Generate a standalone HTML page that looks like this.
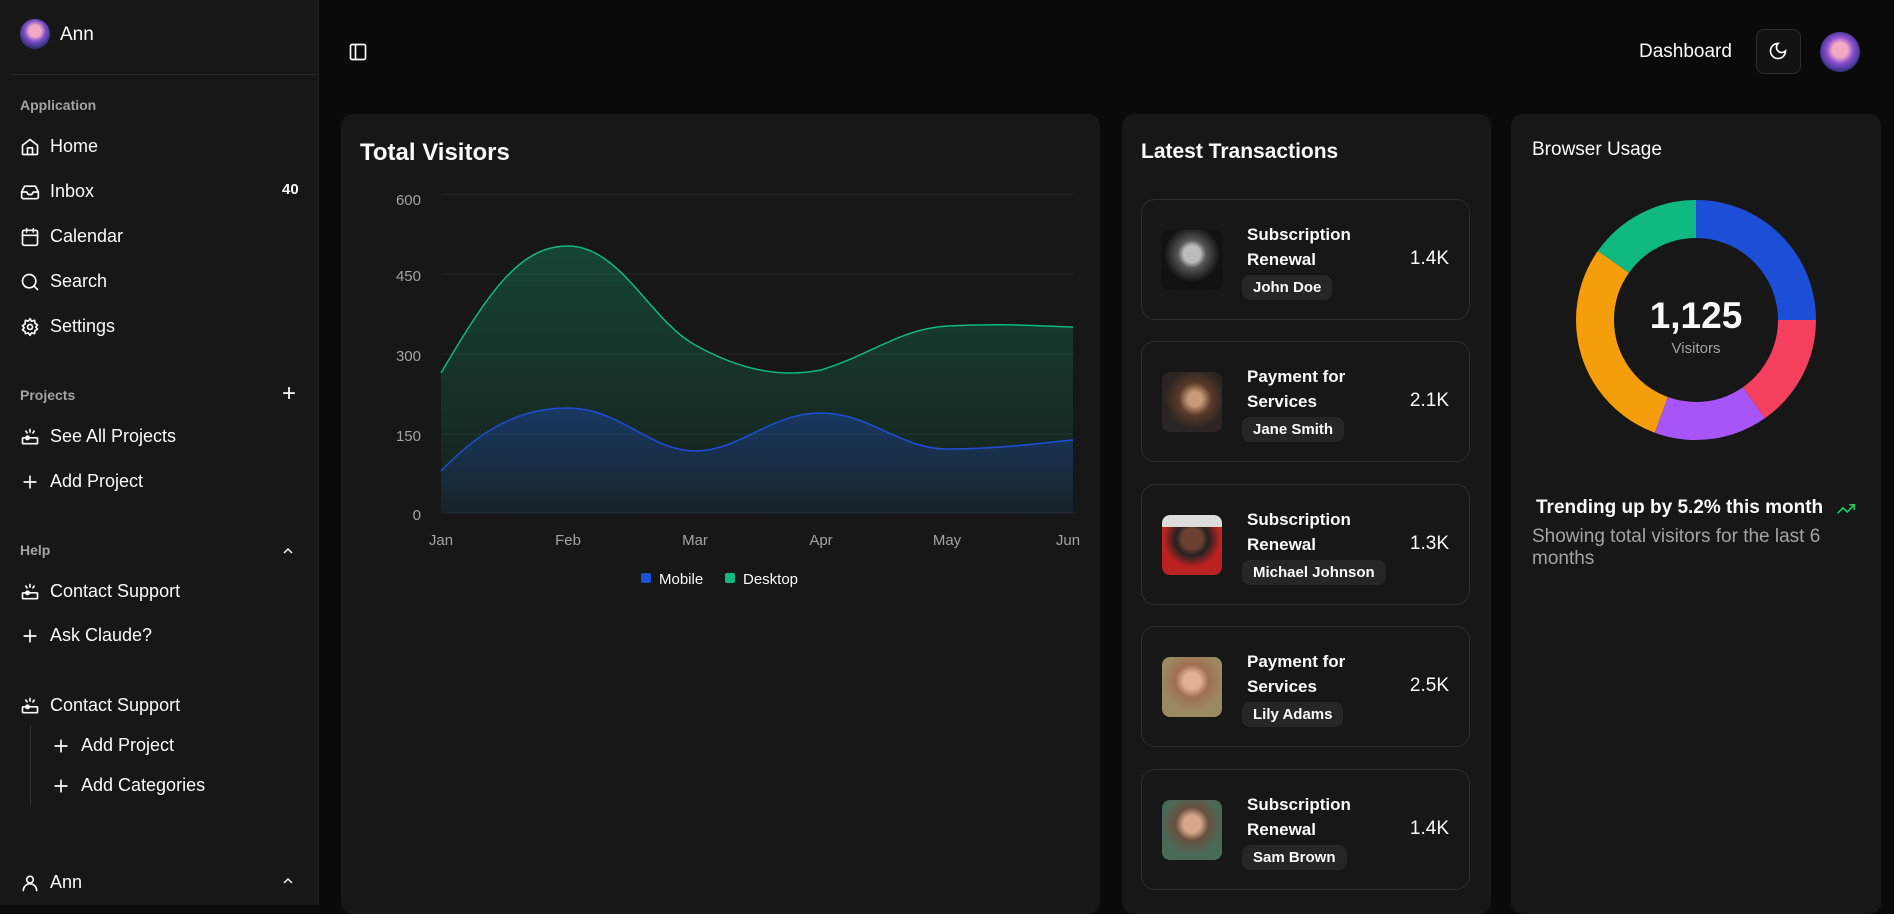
<!DOCTYPE html>
<html><head><meta charset="utf-8"><style>
*{box-sizing:border-box;margin:0;padding:0}
body{width:1894px;height:905px;overflow:hidden;background:#0a0a0a;font-family:"Liberation Sans",sans-serif;color:#fafafa;position:relative}
.sb{position:absolute;left:0;top:0;width:319px;height:905px;background:#171717;border-right:1px solid #222}
.a{position:absolute}
.it{position:absolute;left:20px;font-size:18px;display:flex;align-items:center;gap:0}
.it svg{width:20px;height:20px;margin-right:10px;stroke:#fafafa;fill:none;stroke-width:2;stroke-linecap:round;stroke-linejoin:round}
.lbl{position:absolute;left:20px;font-size:14px;font-weight:bold;color:#a3a3a3}
.card{position:absolute;background:#171717;border-radius:12px}
.tx{position:absolute;left:1141px;width:329px;height:121px;border:1px solid #2e2e2e;border-radius:14px}
.tx .av{position:absolute;left:20px;top:30px;width:60px;height:60px;border-radius:8px}
.tx .t{position:absolute;left:105px;top:22px;font-size:17px;font-weight:bold;line-height:25px;width:120px}
.tx .b{position:absolute;left:100px;top:75px;background:#262626;border-radius:8px;padding:4px 11px;font-size:15px;font-weight:bold}
.tx .v{position:absolute;right:20px;top:48px;font-size:19px}
</style></head><body>
<div class="sb">
 <div class="a" style="left:20px;top:19px;width:30px;height:30px;border-radius:50%;background:radial-gradient(circle at 50% 40%,#f3a9c4 0 25%,#7b4fc9 45%,#2b2d6e 75%)"></div>
 <div class="a" style="left:60px;top:24px;font-size:19px">Ann</div>
 <div class="a" style="left:10px;top:74px;width:309px;height:1px;background:#2a2a2a"></div>
 <div class="lbl" style="top:97px">Application</div>
 <div class="it" style="top:136px"><svg viewBox="0 0 24 24"><path d="M3 10l9-7 9 7v10a1 1 0 0 1-1 1H4a1 1 0 0 1-1-1z"/><path d="M9 21v-8h6v8"/></svg>Home</div>
 <div class="it" style="top:181px"><svg viewBox="0 0 24 24"><path d="M22 12h-6l-2 3h-4l-2-3H2"/><path d="M5.5 5h13L22 12v6a2 2 0 0 1-2 2H4a2 2 0 0 1-2-2v-6z"/></svg>Inbox</div>
 <div class="a" style="left:282px;top:181px;font-size:15px;font-weight:bold">40</div>
 <div class="it" style="top:226px"><svg viewBox="0 0 24 24"><rect x="3" y="4" width="18" height="18" rx="2"/><path d="M16 2v4M8 2v4M3 10h18"/></svg>Calendar</div>
 <div class="it" style="top:271px"><svg viewBox="0 0 24 24"><circle cx="11" cy="11" r="8"/><path d="M21 21l-4.3-4.3"/></svg>Search</div>
 <div class="it" style="top:316px"><svg viewBox="0 0 24 24"><circle cx="12" cy="12" r="3"/><path d="M12 2l2 3 3.5-1 .5 3.5 3 2-2 2.5 2 2.5-3 2-.5 3.5-3.5-1-2 3-2-3-3.5 1L6 17.5l-3-2 2-2.5-2-2.5 3-2L6.5 4 10 5z"/></svg>Settings</div>
 <div class="lbl" style="top:387px">Projects</div>
 <div class="a" style="left:282px;top:380px;font-size:24px;font-weight:300">+</div>
 <div class="it" style="top:426px"><svg viewBox="0 0 24 24"><rect x="3" y="13" width="18" height="7" rx="1"/><circle cx="9" cy="13" r="2"/><path d="M12 3v3M7 5l1.5 2M17 5l-1.5 2"/></svg>See All Projects</div>
 <div class="it" style="top:471px"><svg viewBox="0 0 24 24"><path d="M12 5v14M5 12h14"/></svg>Add Project</div>
 <div class="lbl" style="top:542px">Help</div>
 <svg class="a" style="left:280px;top:543px" width="16" height="16" viewBox="0 0 24 24" fill="none" stroke="#fafafa" stroke-width="2"><path d="M6 15l6-6 6 6"/></svg>
 <div class="it" style="top:581px"><svg viewBox="0 0 24 24"><rect x="3" y="13" width="18" height="7" rx="1"/><circle cx="9" cy="13" r="2"/><path d="M12 3v3M7 5l1.5 2M17 5l-1.5 2"/></svg>Contact Support</div>
 <div class="it" style="top:625px"><svg viewBox="0 0 24 24"><path d="M12 5v14M5 12h14"/></svg>Ask Claude?</div>
 <div class="it" style="top:695px"><svg viewBox="0 0 24 24"><rect x="3" y="13" width="18" height="7" rx="1"/><circle cx="9" cy="13" r="2"/><path d="M12 3v3M7 5l1.5 2M17 5l-1.5 2"/></svg>Contact Support</div>
 <div class="a" style="left:30px;top:725px;width:1px;height:80px;background:#333"></div>
 <div class="it" style="left:51px;top:735px"><svg viewBox="0 0 24 24"><path d="M12 5v14M5 12h14"/></svg>Add Project</div>
 <div class="it" style="left:51px;top:775px"><svg viewBox="0 0 24 24"><path d="M12 5v14M5 12h14"/></svg>Add Categories</div>
 <div class="it" style="top:872px"><svg viewBox="0 0 24 24"><circle cx="12" cy="8" r="4"/><path d="M4 21a8 8 0 0 1 16 0"/></svg>Ann</div>
 <svg class="a" style="left:280px;top:873px" width="16" height="16" viewBox="0 0 24 24" fill="none" stroke="#fafafa" stroke-width="2"><path d="M6 15l6-6 6 6"/></svg>
</div>
<svg class="a" style="left:348px;top:42px" width="20" height="20" viewBox="0 0 24 24" fill="none" stroke="#fafafa" stroke-width="2"><rect x="3" y="3" width="18" height="18" rx="2"/><path d="M9 3v18"/></svg>
<div class="a" style="left:1639px;top:41px;font-size:19px">Dashboard</div>
<div class="a" style="left:1756px;top:29px;width:45px;height:45px;border:1px solid #2e2e2e;border-radius:8px;background:#121212"></div>
<svg class="a" style="left:1768px;top:41px" width="20" height="20" viewBox="0 0 24 24" fill="none" stroke="#fafafa" stroke-width="2"><path d="M12 3a6 6 0 0 0 9 9 9 9 0 1 1-9-9z"/></svg>
<div class="a" style="left:1820px;top:32px;width:40px;height:40px;border-radius:50%;background:radial-gradient(circle at 50% 45%,#f3a9c4 0 25%,#8a4fd0 45%,#2b3080 75%)"></div>

<div class="card" style="left:341px;top:114px;width:759px;height:800px"></div>
<div class="a" style="left:360px;top:139px;font-size:24px;font-weight:bold">Total Visitors</div>
<svg class="a" style="left:0;top:0" width="1100" height="600">
<defs>
<linearGradient id="gd" x1="0" y1="0" x2="0" y2="1"><stop offset="0" stop-color="#10b981" stop-opacity=".28"/><stop offset="1" stop-color="#10b981" stop-opacity=".05"/></linearGradient>
<linearGradient id="gm" x1="0" y1="0" x2="0" y2="1"><stop offset="0" stop-color="#1d4ed8" stop-opacity=".35"/><stop offset="1" stop-color="#1d4ed8" stop-opacity=".06"/></linearGradient>
</defs>
<g stroke="#262626" stroke-width="1"><path d="M441 194.5H1073M441 274H1073M441 354H1073M441 434H1073M441 513H1073"/></g>
<g fill="#a3a3a3" font-size="15" text-anchor="end"><text x="421" y="205">600</text><text x="421" y="281">450</text><text x="421" y="361">300</text><text x="421" y="441">150</text><text x="421" y="520">0</text></g>
<g fill="#a3a3a3" font-size="15" text-anchor="middle"><text x="441" y="545">Jan</text><text x="568" y="545">Feb</text><text x="695" y="545">Mar</text><text x="821" y="545">Apr</text><text x="947" y="545">May</text><text x="1068" y="545">Jun</text></g>
<path d="M441 373C490 290 520 246 568 246C620 246 650 320 695 345C740 370 780 378 821 370C870 355 900 329 947 326C1000 323 1040 326 1073 327V513H441Z" fill="url(#gd)"/>
<path d="M441 373C490 290 520 246 568 246C620 246 650 320 695 345C740 370 780 378 821 370C870 355 900 329 947 326C1000 323 1040 326 1073 327" fill="none" stroke="#10b981" stroke-width="1.5"/>
<path d="M441 471C490 420 530 408 568 408C620 408 650 451 695 451C740 451 770 413 821 413C870 413 900 449 947 449C1000 449 1040 443 1073 440V513H441Z" fill="url(#gm)"/>
<path d="M441 471C490 420 530 408 568 408C620 408 650 451 695 451C740 451 770 413 821 413C870 413 900 449 947 449C1000 449 1040 443 1073 440" fill="none" stroke="#1d4ed8" stroke-width="1.5"/>
<rect x="641" y="573" width="10" height="10" rx="2" fill="#1d4ed8"/><text x="659" y="584" fill="#fafafa" font-size="15">Mobile</text>
<rect x="725" y="573" width="10" height="10" rx="2" fill="#10b981"/><text x="743" y="584" fill="#fafafa" font-size="15">Desktop</text>
</svg>

<div class="card" style="left:1122px;top:114px;width:369px;height:800px"></div>
<div class="a" style="left:1141px;top:140px;font-size:21px;font-weight:bold">Latest Transactions</div>
<div class="tx" style="top:199px"><div class="av" style="background:radial-gradient(circle at 50% 40%,#bbb 0 18%,#555 30%,#111 60%)"></div><div class="t">Subscription Renewal</div><div class="b">John Doe</div><div class="v">1.4K</div></div>
<div class="tx" style="top:341px"><div class="av" style="background:radial-gradient(circle at 55% 45%,#c89a78 0 15%,#5a3a28 35%,#2a2422 65%)"></div><div class="t">Payment for Services</div><div class="b">Jane Smith</div><div class="v">2.1K</div></div>
<div class="tx" style="top:484px"><div class="av" style="background:linear-gradient(#ddd 0 20%,transparent 20%),radial-gradient(circle at 50% 40%,#6b4030 0 22%,#222 35%,#b22 60%)"></div><div class="t">Subscription Renewal</div><div class="b">Michael Johnson</div><div class="v">1.3K</div></div>
<div class="tx" style="top:626px"><div class="av" style="background:radial-gradient(circle at 50% 40%,#e0b090 0 18%,#a07050 35%,#9a8a60 65%)"></div><div class="t">Payment for Services</div><div class="b">Lily Adams</div><div class="v">2.5K</div></div>
<div class="tx" style="top:769px"><div class="av" style="background:radial-gradient(circle at 50% 40%,#d8a88a 0 18%,#6a5040 35%,#4a6a58 65%)"></div><div class="t">Subscription Renewal</div><div class="b">Sam Brown</div><div class="v">1.4K</div></div>

<div class="card" style="left:1511px;top:114px;width:370px;height:800px"></div>
<div class="a" style="left:1532px;top:139px;font-size:19px">Browser Usage</div>
<svg class="a" style="left:1576px;top:200px" width="240" height="240" viewBox="0 0 240 240">
<g transform="rotate(-90 120 120)" fill="none" stroke-width="38">
<circle cx="120" cy="120" r="101" stroke="#1d4ed8" stroke-dasharray="158.6 634.6" stroke-dashoffset="0"/>
<circle cx="120" cy="120" r="101" stroke="#f43f5e" stroke-dasharray="97 634.6" stroke-dashoffset="-158.6"/>
<circle cx="120" cy="120" r="101" stroke="#a855f7" stroke-dasharray="97 634.6" stroke-dashoffset="-255.6"/>
<circle cx="120" cy="120" r="101" stroke="#f59e0b" stroke-dasharray="185.1 634.6" stroke-dashoffset="-352.6"/>
<circle cx="120" cy="120" r="101" stroke="#10b981" stroke-dasharray="97 634.6" stroke-dashoffset="-537.7"/>
</g>
<text x="120" y="128" text-anchor="middle" fill="#fafafa" font-size="37" font-weight="bold">1,125</text>
<text x="120" y="153" text-anchor="middle" fill="#a3a3a3" font-size="15">Visitors</text>
</svg>
<div class="a" style="left:1536px;top:497px;font-size:19px;font-weight:bold">Trending up by 5.2% this month</div>
<svg class="a" style="left:1836px;top:499px" width="20" height="20" viewBox="0 0 24 24" fill="none" stroke="#22c55e" stroke-width="2"><path d="M22 7l-8.5 8.5-5-5L2 17"/><path d="M16 7h6v6"/></svg>
<div class="a" style="left:1532px;top:526px;width:330px;font-size:19px;color:#a3a3a3;line-height:22px">Showing total visitors for the last 6 months</div>
</body></html>
